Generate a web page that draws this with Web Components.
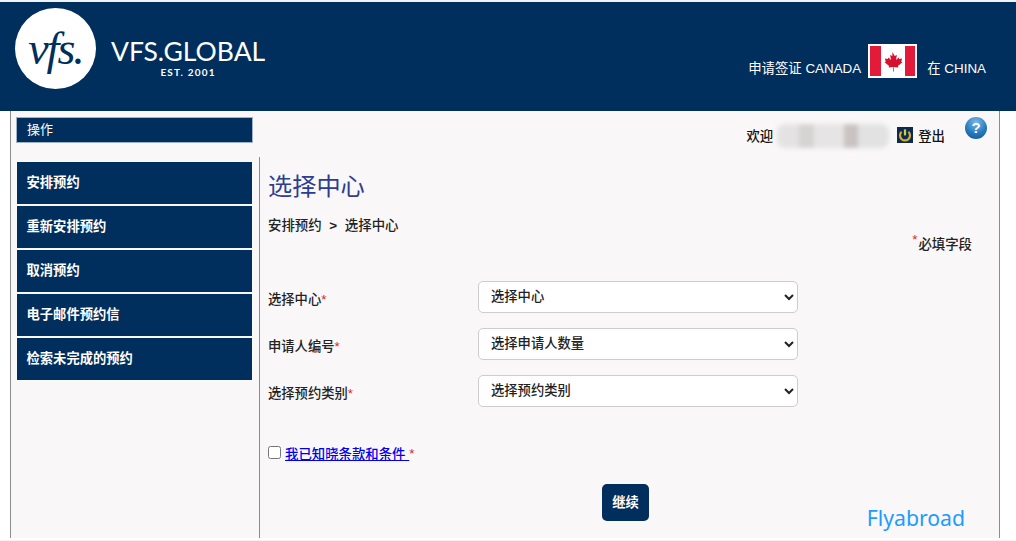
<!DOCTYPE html>
<html lang="zh">
<head>
<meta charset="utf-8">
<title>VFS Global</title>
<style>
	html, body {
		margin: 0;
		padding: 0;
		background: #eff4fa;
		height: 541px;
		overflow: hidden;
		font-family: "Liberation Sans", "Noto Sans CJK SC", sans-serif;
	}
</style>
</head>
<body>
<vfs-app></vfs-app>

<script>
const html = String.raw;
const navy = "#002e5d";

class VfsHeader extends HTMLElement {
	constructor() {
		super();
		this.attachShadow({ mode: "open" });
		this.shadowRoot.innerHTML = html`
			<style>
				:host {
					display: flex;
					justify-content: space-between;
					height: 109px;
					margin-top: 2px;
					background: ${navy};
					color: #fff;
					box-sizing: border-box;
				}
				.logo { display: flex; padding: 6px 0 0 15px; }
				.circle {
					width: 81px;
					height: 81px;
					border-radius: 50%;
					background: #fff;
					color: ${navy};
					display: flex;
					align-items: center;
					justify-content: center;
					font: italic 46px/1 "Liberation Serif", serif;
					letter-spacing: -2px;
				}
				.name {
					margin-left: 15px;
					padding-top: 28px;
					text-align: center;
					font-family: Lato, sans-serif;
				}
				.name b { display: block; font-weight: 400; font-size: 26.5px; line-height: 30px; }
				.name small { display: block; font-weight: 700; font-size: 10px; line-height: 12px; letter-spacing: 1.2px; }
				.dest {
					display: flex;
					align-items: center;
					gap: 7px;
					height: 34px;
					margin: 42px 30px 0 0;
					font-size: 13.4px;
				}
				.dest span { padding-top: 12px; }
				.dest svg { display: block; margin-right: 3px; }
			</style>
			<div class="logo">
				<div class="circle">vfs.</div>
				<div class="name"><b>VFS.GLOBAL</b><small>EST. 2001</small></div>
			</div>
			<div class="dest">
				<span>申请签证 CANADA</span>
				<svg width="49" height="34" viewBox="0 0 49 34">
					<rect width="49" height="34" fill="#fff"/>
					<rect x="2" y="2" width="11" height="30" fill="#e31b3b"/>
					<rect x="37" y="2" width="10" height="30" fill="#e31b3b"/>
					<path transform="translate(0 1.5)" fill="#d3132f" d="M24.5 6.5l2.2 4 2.2-1.1-.9 5.2 2.6-2.7.6 1.5 3-.5-1 3.2 1.2.7-4.5 3.7.5 1.6-4.6-.5.1 4.4h-.8l.1-4.4-4.6.5.5-1.6-4.5-3.7 1.2-.7-1-3.2 3 .5.6-1.5 2.6 2.7-.9-5.2 2.2 1.1z"/>
				</svg>
				<span>在 CHINA</span>
			</div>
		`;
	}
}

class VfsUserBar extends HTMLElement {
	constructor() {
		super();
		this.attachShadow({ mode: "open" });
		this.shadowRoot.innerHTML = html`
			<style>
				:host {
					display: flex;
					align-items: flex-start;
					font-size: 13.4px;
					font-weight: 500;
					color: #111;
					padding: 6px 12px 0 0;
				}
				.who { display: flex; align-items: center; height: 26px; margin-top: 5px; }
				.who span { padding-bottom: 1px; }
				.blur {
					width: 112px;
					height: 24px;
					margin: 1px 8px 0 4px;
					border-radius: 8px;
					background: linear-gradient(90deg, #e4e2e2 0 20%, #d6d3d3 20% 33%, #e6e4e4 33% 60%, #c9c3c2 60% 72%, #e2e2e2 72% 100%);
					filter: blur(2px);
				}
				.out { margin: 0 20px 0 5px; }
				svg { display: block; }
			</style>
			<div class="who">
				<span>欢迎</span>
				<div class="blur"></div>
				<svg width="16" height="16" viewBox="0 0 16 16">
					<rect width="16" height="16" fill="#0d2c4d"/>
					<path d="M4.6 4.8a5 5 0 1 0 6.8 0" fill="none" stroke="#d9a93a" stroke-width="2.2"/>
					<path d="M8 2.4v6" stroke="#c9d24a" stroke-width="2.2"/>
				</svg>
				<span class="out">登出</span>
			</div>
			<svg width="22" height="22" viewBox="0 0 22 22">
				<defs>
					<radialGradient id="g" cx="50%" cy="25%" r="80%">
						<stop offset="0" stop-color="#7fb9e6"/>
						<stop offset=".6" stop-color="#2a7cc0"/>
						<stop offset="1" stop-color="#145a96"/>
					</radialGradient>
				</defs>
				<circle cx="11" cy="11" r="11" fill="url(#g)"/>
				<text x="11" y="16" text-anchor="middle" fill="#fff" font-family="Liberation Sans" font-weight="700" font-size="15">?</text>
			</svg>
		`;
	}
}

class VfsMenuItem extends HTMLElement {
	constructor() {
		super();
		this.attachShadow({ mode: "open" });
		this.shadowRoot.innerHTML = html`
			<style>
				:host {
					display: flex;
					align-items: center;
					box-sizing: border-box;
					height: 42px;
					padding: 0 0 4px 9.5px;
					background: ${navy};
					color: #fff;
					font-size: 13.3px;
					font-weight: 700;
				}
			</style>
			<slot></slot>
		`;
	}
}

class VfsSidebar extends HTMLElement {
	constructor() {
		super();
		this.attachShadow({ mode: "open" });
		this.shadowRoot.innerHTML = html`
			<style>
				:host {
					display: flex;
					flex-direction: column;
					gap: 2px;
					width: 235px;
					padding: 5px 7px 0 6px;
					border-right: 1px solid #8c8c8c;
				}
			</style>
			<slot></slot>
		`;
	}
}

class VfsFormRow extends HTMLElement {
	constructor() {
		super();
		this.attachShadow({ mode: "open" });
		const label = this.getAttribute("label");
		const placeholder = this.getAttribute("placeholder");
		this.shadowRoot.innerHTML = html`
			<style>
				:host {
					display: flex;
					align-items: center;
					height: 32px;
					font-size: 13.3px;
					font-weight: 500;
					color: #222;
				}
				label { width: 210px; padding-top: 3px; }
				i { color: #e0202a; font-style: normal; }
				select {
					width: 320px;
					height: 32px;
					padding: 0 4px 1px 8px;
					border: 1px solid #cfcccc;
					border-radius: 5px;
					background: #fff;
					color: #222;
					font: 500 13.3px "Liberation Sans", "Noto Sans CJK SC", sans-serif;
				}
			</style>
			<label>${label}<i>*</i></label>
			<select><option>${placeholder}</option></select>
		`;
	}
}

class VfsForm extends HTMLElement {
	constructor() {
		super();
		this.attachShadow({ mode: "open" });
		this.shadowRoot.innerHTML = html`
			<style>
				:host {
					display: block;
					flex: 1;
					position: relative;
					padding: 0 16px 0 8px;
					color: #222;
				}
				h1 {
					margin: 0;
					padding-top: 13px;
					font-size: 24.2px;
					line-height: 34px;
					font-weight: 400;
					color: #2f3d8f;
				}
				.crumb {
					margin-top: 12px;
					font-size: 13.4px;
					line-height: 20px;
					font-weight: 500;
				}
				.crumb b { font-weight: 700; margin: 0 4px; }
				.required {
					margin: -1px 11px 0 0;
					text-align: right;
					font-size: 13.4px;
					line-height: 19px;
					font-weight: 500;
				}
				.required i, .terms i { color: #e0202a; font-style: normal; }
				.required i { position: relative; top: -5px; margin-right: 1px; }
				.rows {
					display: flex;
					flex-direction: column;
					gap: 15px;
					margin-top: 27px;
				}
				.terms {
					display: flex;
					align-items: center;
					margin-top: 36px;
					height: 20px;
					font-size: 13.4px;
					font-weight: 500;
				}
				.terms input { width: 13px; height: 13px; margin: 0 4px 0 0; position: relative; top: -1px; }
				.terms a { color: #0000ee; text-decoration: underline; white-space: pre; }
				.submit { display: flex; justify-content: center; margin-top: 21px; }
				button {
					width: 47px;
					height: 37px;
					border: 0;
					padding: 0 0 2px;
					border-radius: 5px;
					background: ${navy};
					color: #fff;
					font: 700 13.3px "Liberation Sans", "Noto Sans CJK SC", sans-serif;
				}
				.mark {
					position: absolute;
					right: 34px;
					top: 346px;
					color: #1e9bff;
					font: 400 21.2px/30px "Noto Sans", sans-serif;
				}
			</style>
			<h1>选择中心</h1>
			<div class="crumb">安排预约 <b>&gt;</b> 选择中心</div>
			<div class="required"><i>*</i>必填字段</div>
			<div class="rows">
				<vfs-form-row label="选择中心" placeholder="选择中心"></vfs-form-row>
				<vfs-form-row label="申请人编号" placeholder="选择申请人数量"></vfs-form-row>
				<vfs-form-row label="选择预约类别" placeholder="选择预约类别"></vfs-form-row>
			</div>
			<div class="terms">
				<input type="checkbox">
				<a href="#">我已知晓条款和条件 </a><i>*</i>
			</div>
			<div class="submit"><button>继续</button></div>
			<div class="mark">Flyabroad</div>
		`;
	}
}

class VfsApp extends HTMLElement {
	constructor() {
		super();
		this.attachShadow({ mode: "open" });
		this.shadowRoot.innerHTML = html`
			<style>
				:host { display: block; background: #fff; height: 538px; }
				.panel {
					display: flex;
					flex-direction: column;
					height: 427px;
					margin: 0 16px 0 10px;
					background: #f9f7f8;
					border: solid #8c8c8c;
					border-width: 0 1px;
				}
				.top { display: flex; justify-content: space-between; height: 46px; }
				.action {
					box-sizing: border-box;
					width: 237px;
					height: 26px;
					margin: 6px 0 0 5px;
					padding-left: 10px;
					border: 1px solid #9fb2c9;
					background: ${navy};
					color: #fff;
					font-size: 13px;
					line-height: 24px;
				}
				.body { display: flex; flex: 1; }
			</style>
			<vfs-header></vfs-header>
			<div class="panel">
				<div class="top">
					<div class="action">操作</div>
					<vfs-user-bar></vfs-user-bar>
				</div>
				<div class="body">
					<vfs-sidebar>
						<vfs-menu-item>安排预约</vfs-menu-item>
						<vfs-menu-item>重新安排预约</vfs-menu-item>
						<vfs-menu-item>取消预约</vfs-menu-item>
						<vfs-menu-item>电子邮件预约信</vfs-menu-item>
						<vfs-menu-item>检索未完成的预约</vfs-menu-item>
					</vfs-sidebar>
					<vfs-form></vfs-form>
				</div>
			</div>
		`;
	}
}

customElements.define("vfs-header", VfsHeader);
customElements.define("vfs-user-bar", VfsUserBar);
customElements.define("vfs-menu-item", VfsMenuItem);
customElements.define("vfs-sidebar", VfsSidebar);
customElements.define("vfs-form-row", VfsFormRow);
customElements.define("vfs-form", VfsForm);
customElements.define("vfs-app", VfsApp);
</script>
</body>
</html>
